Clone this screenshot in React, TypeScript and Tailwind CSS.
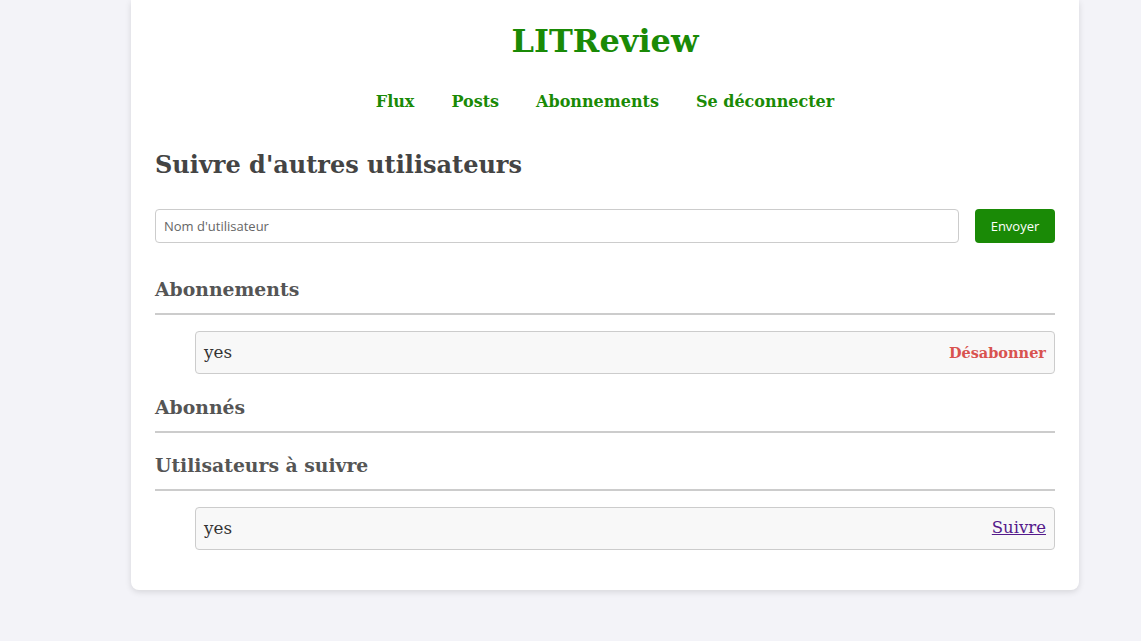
import React from "react";

const serif = { fontFamily: '"DejaVu Serif", "Liberation Serif", serif' };

function Section({ title, mt, children }: { title: string; mt: string; children?: React.ReactNode }) {
  return (
    <div className="flex flex-col">
      <h3
        className={
          mt +
          " pb-[12px] border-b-2 border-[#cccccc] text-[18.8px] leading-[24px] font-bold text-[#555555]"
        }
      >
        {title}
      </h3>
      {children}
    </div>
  );
}

function Item({ name, action }: { name: string; action: React.ReactNode }) {
  return (
    <div className="mt-[16px] ml-[40px] h-[43px] flex items-center justify-between px-[8px] bg-[#f8f8f8] border border-[#cccccc] rounded-[4px]">
      <span className="text-[16.8px] text-[#333333]">{name}</span>
      {action}
    </div>
  );
}

export default function App() {
  return (
    <div className="min-h-[641px] bg-[#f3f3f8]" style={serif}>
      <div className="ml-[131px] w-[948px] bg-white rounded-b-[8px] shadow-[0_2px_6px_rgba(0,0,0,0.12)] px-[24px] pb-[40px] flex flex-col">
        <h1 className="pt-[21px] text-center text-[32px] leading-[40px] font-bold text-[#1a8a06]">LITReview</h1>
        <nav className="mt-[29px] flex justify-center gap-[37px] text-[16px] leading-[24px] font-bold text-[#1a8a06]">
          <a href="#">Flux</a>
          <a href="#">Posts</a>
          <a href="#">Abonnements</a>
          <a href="#">Se déconnecter</a>
        </nav>
        <h2 className="mt-[35px] text-[24px] leading-[32px] font-bold text-[#444444]">Suivre d'autres utilisateurs</h2>
        <form className="mt-[28px] flex gap-[16px]" onSubmit={(e) => e.preventDefault()}>
          <input
            className="flex-1 h-[34px] border border-[#cccccc] rounded-[4px] px-[8px] text-[13px] placeholder:text-[#666666] outline-none"
            style={{ fontFamily: '"Open Sans", "Noto Sans", sans-serif' }}
            placeholder="Nom d'utilisateur"
          />
          <button
            className="w-[80px] h-[34px] pt-px bg-[#1a8a06] text-white text-[13px] rounded-[4px]"
            style={{ fontFamily: '"Open Sans", "Noto Sans", sans-serif' }}
          >
            Envoyer
          </button>
        </form>
        <Section title="Abonnements" mt="mt-[34px]">
          <Item
            name="yes"
            action={<span className="text-[14.5px] font-bold text-[#d9534f]">Désabonner</span>}
          />
        </Section>
        <Section title="Abonnés" mt="mt-[21px]" />
        <Section title="Utilisateurs à suivre" mt="mt-[20px]">
          <Item
            name="yes"
            action={<a href="#" className="text-[16.5px] underline text-[#551a8b]">Suivre</a>}
          />
        </Section>
      </div>
    </div>
  );
}
